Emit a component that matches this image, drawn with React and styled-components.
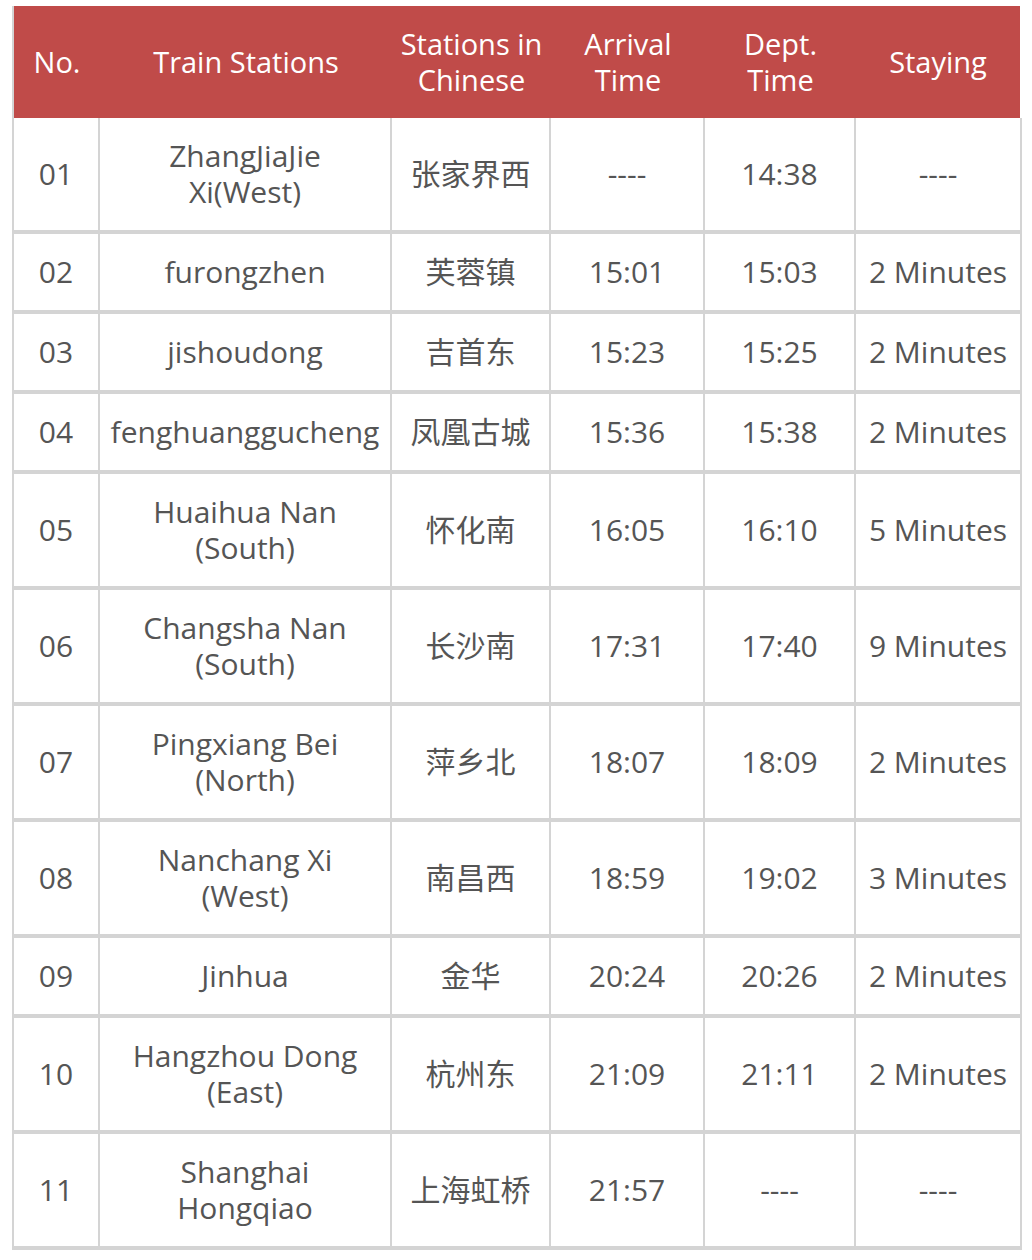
import React from 'react'
import styled, { createGlobalStyle } from 'styled-components'

const rows = [
  ['01', ['ZhangJiaJie', 'Xi(West)'], '张家界西', '----', '14:38', '----'],
  ['02', ['furongzhen'], '芙蓉镇', '15:01', '15:03', '2 Minutes'],
  ['03', ['jishoudong'], '吉首东', '15:23', '15:25', '2 Minutes'],
  ['04', ['fenghuanggucheng'], '凤凰古城', '15:36', '15:38', '2 Minutes'],
  ['05', ['Huaihua Nan', '(South)'], '怀化南', '16:05', '16:10', '5 Minutes'],
  ['06', ['Changsha Nan', '(South)'], '长沙南', '17:31', '17:40', '9 Minutes'],
  ['07', ['Pingxiang Bei', '(North)'], '萍乡北', '18:07', '18:09', '2 Minutes'],
  ['08', ['Nanchang Xi', '(West)'], '南昌西', '18:59', '19:02', '3 Minutes'],
  ['09', ['Jinhua'], '金华', '20:24', '20:26', '2 Minutes'],
  ['10', ['Hangzhou Dong', '(East)'], '杭州东', '21:09', '21:11', '2 Minutes'],
  ['11', ['Shanghai', 'Hongqiao'], '上海虹桥', '21:57', '----', '----'],
]

const heads = [['No.'], ['Train Stations'], ['Stations in', 'Chinese'], ['Arrival', 'Time'], ['Dept.', 'Time'], ['Staying']]
// column widths, right border included
const widths = [86, 292, 159, 154, 151, 166]

const Global = createGlobalStyle`
  body{
    margin:0;
    background:#fff;
    font-family:"Open Sans","Noto Sans CJK SC",sans-serif;
  }
`

const Page = styled.div`
  padding:6px 10px 10px 12px;
`

const Table = styled.table`
  width:1010px;
  border-spacing:0;
  border-collapse:separate;
  table-layout:fixed;
  border-left:2px solid #d4d4d4;
`

const Head = styled.th`
  background:#c04b49;
  color:#fff;
  font-weight:400;
  font-size:29px;
  line-height:36px;
  padding:20px 4px;
  text-align:center;
  vertical-align:middle;
  &:last-child{
    border-right:2px solid #fff;
  }
`

const Cell = styled.td`
  color:#555;
  font-size:30px;
  line-height:36px;
  padding:20px 6px;
  text-align:center;
  vertical-align:middle;
  border-right:2px solid #d4d4d4;
  border-bottom:4px solid #d4d4d4;
`

const Line = styled.span`
  display:block;
  white-space:nowrap;
`

const Lines = ({ items }) => items.map((t) => <Line key={t}>{t}</Line>)

const App = () => {
  return (
    <Page>
      <Global />
      <Table>
        <colgroup>
          {widths.map((w, i) => <col key={i} style={{ width: w }} />)}
        </colgroup>
        <thead>
          <tr>
            {heads.map((h) => <Head key={h[0]}><Lines items={h} /></Head>)}
          </tr>
        </thead>
        <tbody>
          {rows.map((r) => (
            <tr key={r[0]}>
              <Cell>{r[0]}</Cell>
              <Cell><Lines items={r[1]} /></Cell>
              {r.slice(2).map((c, i) => <Cell key={i}>{c}</Cell>)}
            </tr>
          ))}
        </tbody>
      </Table>
    </Page>
  )
}

export default App
